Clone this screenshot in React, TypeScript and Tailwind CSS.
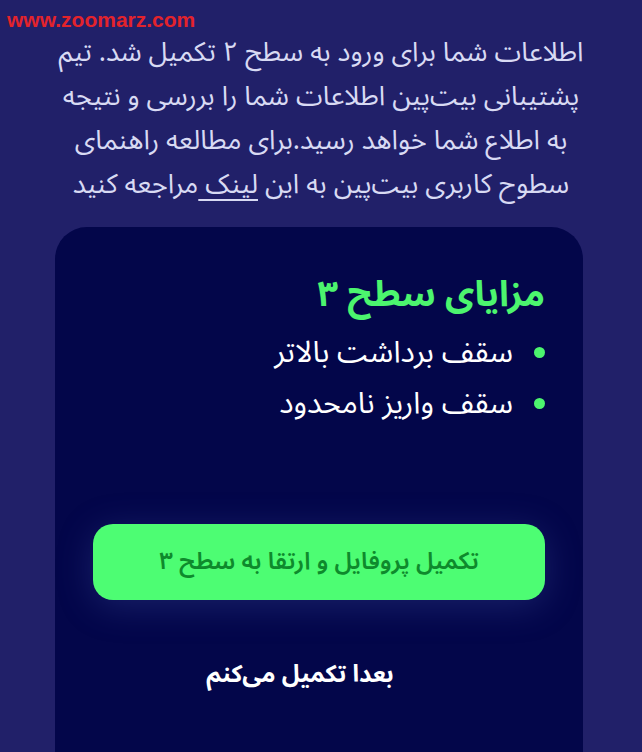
import React from "react";

const font = { fontFamily: '"Noto Sans Arabic","Vazirmatn","DejaVu Sans",sans-serif' };

export default function App() {
  return (
    <div className="relative w-full h-[752px] overflow-hidden bg-[#212069]" style={font}>
      <div
        className="absolute left-[7px] top-[9px] text-[21px] font-bold text-[#e3232c] leading-none"
        style={{ fontFamily: '"Liberation Sans",Arial,sans-serif' }}
      >
        www.zoomarz.com
      </div>
      <div dir="rtl" className="pt-[31px] text-center text-[27px] leading-[44px] text-[#d8daf3]">
        <div>اطلاعات شما برای ورود به سطح ۲ تکمیل شد. تیم</div>
        <div>پشتیبانی بیت‌پین اطلاعات شما را بررسی و نتیجه</div>
        <div>به اطلاع شما خواهد رسید.برای مطالعه راهنمای</div>
        <div>
          سطوح کاربری بیت‌پین به این <span className="underline underline-offset-[6px]">لینک </span>مراجعه کنید
        </div>
      </div>
      <div dir="rtl" className="ml-[55px] mt-[20px] w-[528px] h-[600px] rounded-[32px] bg-[#03064a] px-[38px] pt-[44px]">
        <div className="text-[36px] font-bold leading-[48px] text-[#4cf56e]">مزایای سطح ۳</div>
        <ul className="mt-[8px] text-[30px] leading-[51px] text-white">
          <li className="flex items-center gap-[21px]">
            <span className="w-[11px] h-[11px] shrink-0 rounded-full bg-[#4cf56e]" />
            <span>سقف برداشت بالاتر</span>
          </li>
          <li className="flex items-center gap-[21px]">
            <span className="w-[11px] h-[11px] shrink-0 rounded-full bg-[#4cf56e]" />
            <span>سقف واریز نامحدود</span>
          </li>
        </ul>
        <button className="mt-[95px] flex w-full h-[76px] items-center justify-center rounded-[20px] bg-[#4dfd73] text-[24px] font-semibold text-[#0e8a2c] shadow-[0_6px_36px_rgba(90,110,200,0.25)]">
          تکمیل پروفایل و ارتقا به سطح ۳
        </button>
        <div className="mt-[50px] pr-[38px] text-center text-[24px] font-bold leading-[50px] text-white">بعدا تکمیل می‌کنم</div>
      </div>
    </div>
  );
}
